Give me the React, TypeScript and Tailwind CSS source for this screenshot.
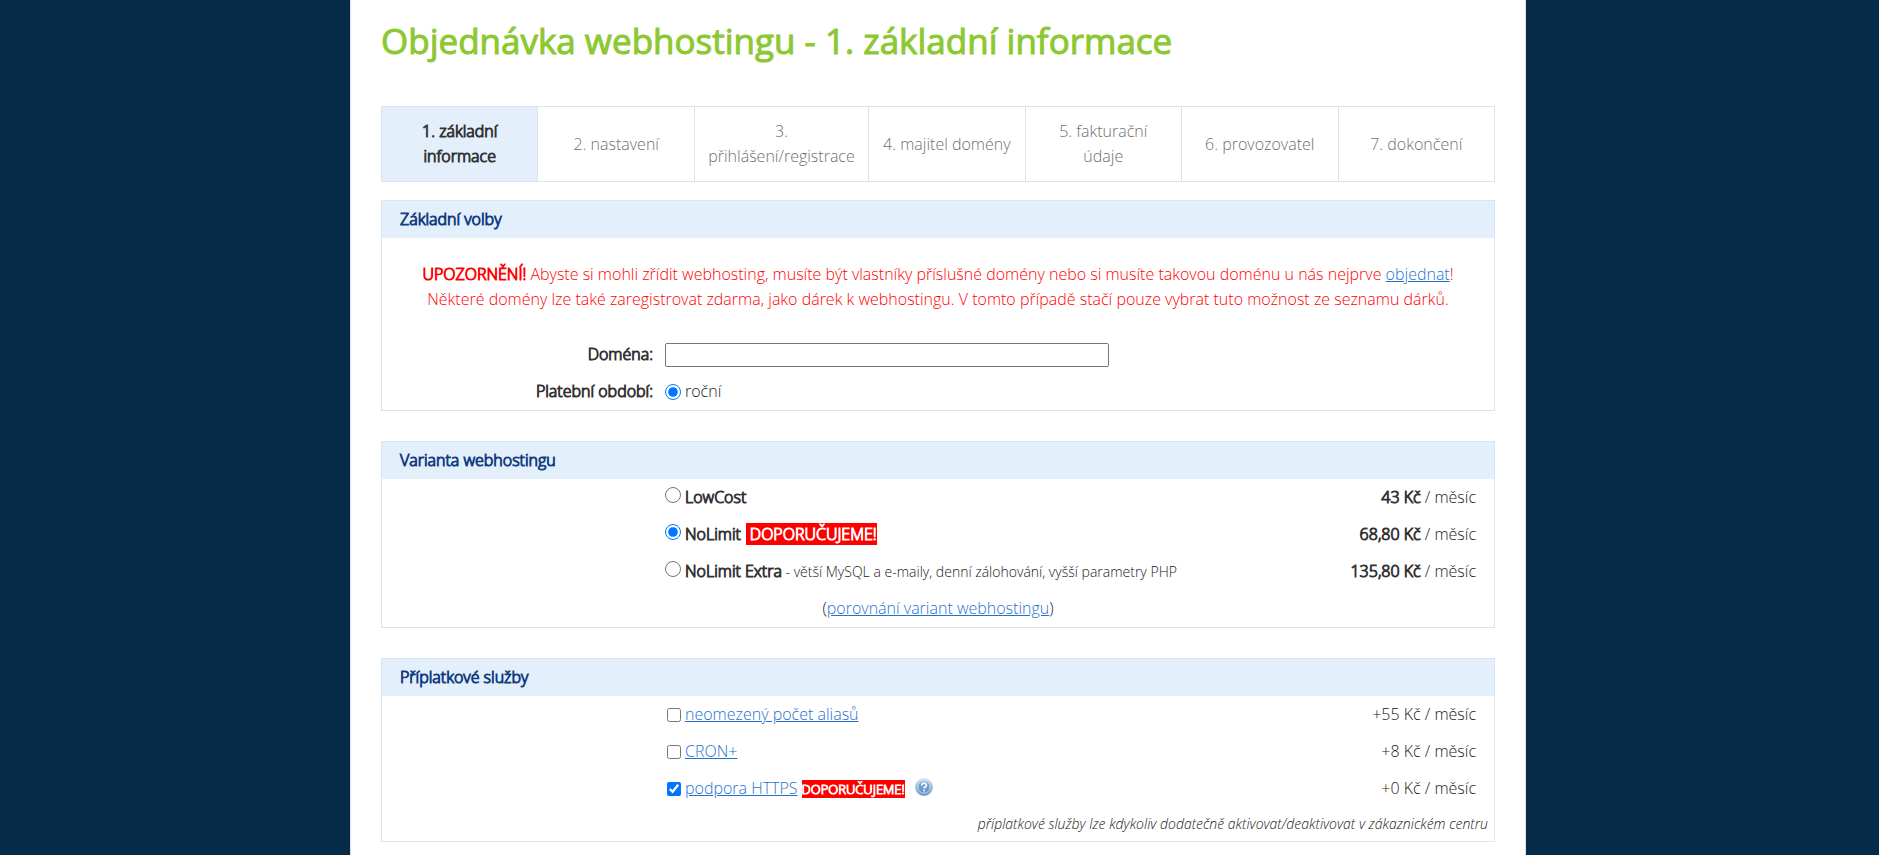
import { useState, type ReactNode } from "react";

const STEPS = [
  "1. základní informace",
  "2. nastavení",
  "3. přihlášení/registrace",
  "4. majitel domény",
  "5. fakturační údaje",
  "6. provozovatel",
  "7. dokončení",
];

const VARIANTS = [
  { id: "lowcost", name: "LowCost", price: "43 Kč" },
  { id: "nolimit", name: "NoLimit", price: "68,80 Kč", recommended: true },
  {
    id: "nolimit-extra",
    name: "NoLimit Extra",
    price: "135,80 Kč",
    note: "- větší MySQL a e-maily, denní zálohování, vyšší parametry PHP",
  },
];

const SERVICES = [
  { id: "aliases", name: "neomezený počet aliasů", price: "+55 Kč" },
  { id: "cron", name: "CRON+", price: "+8 Kč" },
  { id: "https", name: "podpora HTTPS", price: "+0 Kč", recommended: true },
];

const linkClass = "text-[#1f72d0] underline hover:no-underline";
const boldClass = "font-light [-webkit-text-stroke:1px]";

function Panel({ title, children }: { title: string; children: ReactNode }) {
  return (
    <section className="border border-[#d9e4ee]">
      <h2 className={`bg-[#e3effb] px-[18px] py-[6px] text-[#103c80] ${boldClass}`}>{title}</h2>
      {children}
    </section>
  );
}

function HelpIcon() {
  return (
    <svg viewBox="0 0 18 18" className="size-[18px]" aria-hidden="true">
      <defs>
        <linearGradient id="help-ring" x1="0" y1="0" x2="0" y2="1">
          <stop offset="0" stopColor="#dbe8f4" />
          <stop offset="1" stopColor="#6d9ac8" />
        </linearGradient>
        <linearGradient id="help-fill" x1="0" y1="0" x2="0" y2="1">
          <stop offset="0" stopColor="#86abd4" />
          <stop offset="1" stopColor="#6291c6" />
        </linearGradient>
      </defs>
      <circle cx="9" cy="9" r="9" fill="url(#help-ring)" />
      <circle cx="9" cy="9" r="6" fill="url(#help-fill)" stroke="#b4cce5" />
      <path d="M6.8 7.4c0-3 4.6-2.9 4.6-.2 0 1.6-2.2 1.5-2.2 3.2" fill="none" stroke="#fff" strokeWidth="1.6" />
      <circle cx="9.2" cy="12.4" r="1" fill="#fff" />
    </svg>
  );
}

export default function App() {
  const [variant, setVariant] = useState("nolimit");
  const [services, setServices] = useState<string[]>(["https"]);

  const toggleService = (id: string) =>
    setServices((current) => (current.includes(id) ? current.filter((item) => item !== id) : [...current, id]));

  return (
    <div className="min-h-screen bg-[#052b48] pr-[3px] font-['Open_Sans',sans-serif] text-base leading-[25px] font-light text-[#222]">
      <main className="mx-auto min-h-screen max-w-[1176px] border-x border-[#d9e4ee] bg-white px-[30px] pt-[15px] pb-4">
        <h1 className="text-[35px] leading-[52px] font-normal text-[#8cc832] [-webkit-text-stroke:1px]">
          Objednávka webhostingu - 1. základní informace
        </h1>

        <table className="mt-[39px] w-full border-collapse">
          <tbody>
            <tr>
              {STEPS.map((step, index) => (
                <td
                  key={step}
                  className={
                    index === 0
                      ? `w-[14%] border border-[#d9e4ee] bg-[#e3effb] px-[13px] py-3 text-center text-[#333] ${boldClass}`
                      : "w-[14%] border border-[#d9e4ee] px-[13px] py-3 text-center text-[#707070]"
                  }
                >
                  {step}
                </td>
              ))}
            </tr>
          </tbody>
        </table>

        <form className="mt-[18px] flex flex-col gap-[30px]">
          <Panel title="Základní volby">
            <p className="px-4 py-6 text-center text-[#f00]">
              <strong className={boldClass}>UPOZORNĚNÍ!</strong> Abyste si mohli zřídit webhosting, musíte být
              vlastníky příslušné domény nebo si musíte takovou doménu u nás nejprve{" "}
              <a href="#objednat" className={linkClass}>
                objednat
              </a>
              !
              <br />
              Některé domény lze také zaregistrovat zdarma, jako dárek k webhostingu. V tomto případě stačí pouze
              vybrat tuto možnost ze seznamu dárků.
            </p>
            <div className="grid grid-cols-[271px_1fr] items-center gap-x-3">
              <label htmlFor="domain" className={`py-[6px] text-right text-[#333] ${boldClass}`}>
                Doména:
              </label>
              <input id="domain" type="text" className="h-6 w-[444px] max-w-full rounded-xs border border-[#767676] px-1" />
              <span className={`py-[6px] text-right text-[#333] ${boldClass}`}>Platební období:</span>
              <label className="flex items-center gap-1">
                <input type="radio" name="period" defaultChecked className="size-4" />
                roční
              </label>
            </div>
          </Panel>

          <Panel title="Varianta webhostingu">
            {VARIANTS.map((item) => (
              <div key={item.id} className="flex py-[6px] pr-[18px] pl-[283px]">
                <label className="flex flex-1 gap-1">
                  <input
                    type="radio"
                    name="variant"
                    className="mt-[2px] size-4"
                    checked={variant === item.id}
                    onChange={() => setVariant(item.id)}
                  />
                  <span>
                    <strong className={`text-[#333] ${boldClass}`}>{item.name}</strong>
                    {item.recommended && (
                      <strong className={`ml-[5px] bg-[#f00] pl-1 text-white ${boldClass}`}>DOPORUČUJEME!</strong>
                    )}
                    {item.note && <span className="text-sm leading-none"> {item.note}</span>}
                  </span>
                </label>
                <span>
                  <strong className={`text-[#333] ${boldClass}`}>{item.price}</strong> / měsíc
                </span>
              </div>
            ))}
            <p className="py-[6px] text-center">
              (
              <a href="#porovnani" className={linkClass}>
                porovnání variant webhostingu
              </a>
              )
            </p>
          </Panel>

          <Panel title="Příplatkové služby">
            {SERVICES.map((item) => (
              <div key={item.id} className="flex py-[6px] pr-[18px] pl-[285px]">
                <div className="flex flex-1 items-center gap-1">
                  <input
                    type="checkbox"
                    aria-label={item.name}
                    className="size-[14px]"
                    checked={services.includes(item.id)}
                    onChange={() => toggleService(item.id)}
                  />
                  <a href={`#${item.id}`} className={linkClass}>
                    {item.name}
                  </a>
                  {item.recommended && (
                    <>
                      <strong className={`bg-[#f00] text-[13px] leading-[18px] text-white ${boldClass}`}>
                        DOPORUČUJEME!
                      </strong>
                      <button type="button" aria-label="Nápověda" className="mb-1 ml-[6px]">
                        <HelpIcon />
                      </button>
                    </>
                  )}
                </div>
                <span>{item.price} / měsíc</span>
              </div>
            ))}
            <p className="px-[6px] pt-1 pb-[5px] text-right text-sm leading-[25px] italic">
              příplatkové služby lze kdykoliv dodatečně aktivovat/deaktivovat v zákaznickém centru
            </p>
          </Panel>
        </form>
      </main>
    </div>
  );
}
